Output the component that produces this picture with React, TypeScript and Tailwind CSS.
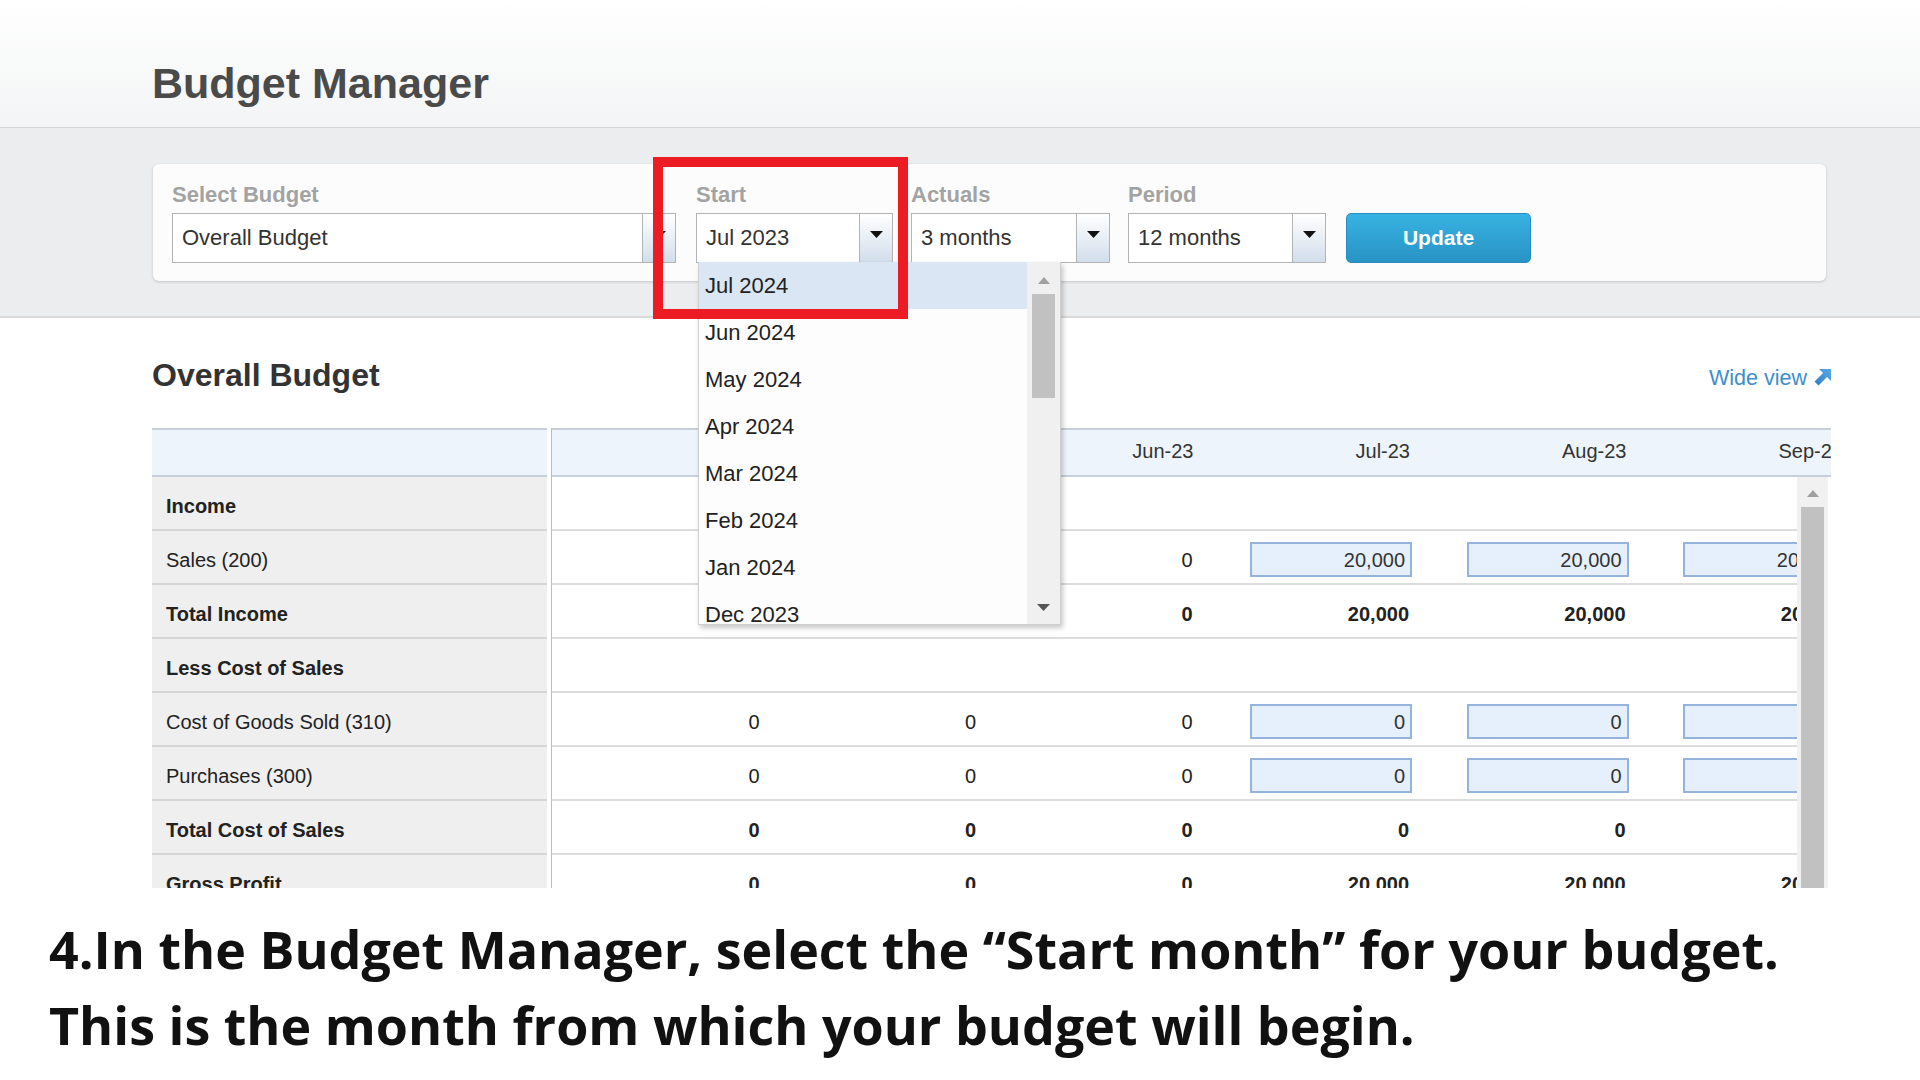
import React from "react";

function DownArrow({ color = "#111" }: { color?: string }) {
  return (
    <svg width="13" height="7" viewBox="0 0 13 7">
      <path d="M0 0H13L6.5 7Z" fill={color} />
    </svg>
  );
}

function UpArrow({ color = "#a0a0a0" }: { color?: string }) {
  return (
    <svg width="12" height="7" viewBox="0 0 12 7">
      <path d="M0 7H12L6 0Z" fill={color} />
    </svg>
  );
}

function SelectBox({ value, className }: { value: string; className: string }) {
  return (
    <div className={`flex h-[50px] border border-[#b3b3b3] bg-white ${className}`}>
      <div className="flex flex-1 items-center pl-[9px] text-[22px] leading-[24px] text-[#333]">{value}</div>
      <div className="flex w-[33px] justify-center border-l border-[#b3b3b3] bg-gradient-to-b from-white to-[#d2deec] pt-[17px]">
        <DownArrow />
      </div>
    </div>
  );
}

function Label({ children }: { children: React.ReactNode }) {
  return <div className="h-[24px] text-[22px] font-bold leading-[24px] text-[#a3a3a3]">{children}</div>;
}

const months = ["Apr-23", "May-23", "Jun-23", "Jul-23", "Aug-23", "Sep-23"];

type Cell = { v: string; input?: boolean };
type Row = { label: string; bold?: boolean; cells: Cell[] };

const inp = (v: string): Cell => ({ v, input: true });
const val = (v: string): Cell => ({ v });

const rows: Row[] = [
  { label: "Income", bold: true, cells: [] },
  { label: "Sales (200)", cells: [val("0"), val("0"), val("0"), inp("20,000"), inp("20,000"), inp("20,000")] },
  { label: "Total Income", bold: true, cells: [val("0"), val("0"), val("0"), val("20,000"), val("20,000"), val("20,000")] },
  { label: "Less Cost of Sales", bold: true, cells: [] },
  { label: "Cost of Goods Sold (310)", cells: [val("0"), val("0"), val("0"), inp("0"), inp("0"), inp("0")] },
  { label: "Purchases (300)", cells: [val("0"), val("0"), val("0"), inp("0"), inp("0"), inp("0")] },
  { label: "Total Cost of Sales", bold: true, cells: [val("0"), val("0"), val("0"), val("0"), val("0"), val("0")] },
  { label: "Gross Profit", bold: true, cells: [val("0"), val("0"), val("0"), val("20,000"), val("20,000"), val("20,000")] },
];

const listItems = ["Jul 2024", "Jun 2024", "May 2024", "Apr 2024", "Mar 2024", "Feb 2024", "Jan 2024", "Dec 2023"];

function WideIcon() {
  return (
    <svg width="18" height="18" viewBox="0 0 18 18">
      <defs>
        <linearGradient id="wv" x1="0" y1="1" x2="1" y2="0">
          <stop offset="0" stopColor="#2f7fc4" />
          <stop offset="1" stopColor="#5aa8e6" />
        </linearGradient>
      </defs>
      <path d="M18 0V12L14 8L5.5 16.5L1.5 12.5L10 4L6 0Z" fill="url(#wv)" />
    </svg>
  );
}

export default function App() {
  return (
    <div className="relative h-[1080px] w-[1920px] overflow-hidden bg-white">
      <div className="h-[888px] overflow-hidden font-['Liberation_Sans',Arial,sans-serif]">
        {/* Header */}
        <div className="h-[128px] border-b border-[#d6d6d6] bg-gradient-to-b from-white to-[#f3f4f5] pl-[152px] pt-[62px]">
          <div className="text-[43px] font-bold leading-[43px] text-[#4a4a4a]">Budget Manager</div>
        </div>

        {/* Filter band */}
        <div className="h-[190px] border-b-2 border-[#d9d9da] bg-[#ecedee] pt-[36px]">
          <div className="ml-[153px] flex h-[117px] w-[1673px] items-start rounded-[6px] bg-[#fcfcfc] pl-[19px] pt-[19px] shadow-[0_1px_3px_rgba(0,0,0,0.18)]">
            <div className="flex flex-col gap-[6px]">
              <Label>Select Budget</Label>
              <SelectBox value="Overall Budget" className="w-[504px]" />
            </div>
            <div className="relative ml-[20px] flex flex-col gap-[6px]">
              <Label>Start</Label>
              <SelectBox value="Jul 2023" className="w-[197px]" />
              <div className="absolute left-[2px] top-[79px] z-20 flex h-[363px] w-[363px] border-x border-b border-[#cfcfcf] shadow-[2px_3px_5px_rgba(0,0,0,0.22)]">
                <div className="flex w-[329px] flex-col overflow-hidden bg-[#fdfdfd]">
                  {listItems.map((m, i) => (
                    <div
                      key={m}
                      className={`flex h-[47px] shrink-0 items-center pl-[6px] text-[22px] leading-[24px] text-[#222] ${i === 0 ? "bg-[#dbe6f5]" : ""}`}
                    >
                      {m}
                    </div>
                  ))}
                </div>
                <div className="flex w-[33px] flex-col items-center bg-[#f0f0f0]">
                  <div className="mt-[15px] flex">
                    <UpArrow />
                  </div>
                  <div className="mt-[10px] h-[104px] w-[23px] bg-[#c1c1c1]" />
                  <div className="mb-[13px] mt-auto flex">
                    <DownArrow color="#555" />
                  </div>
                </div>
              </div>
            </div>
            <div className="ml-[18px] flex flex-col gap-[6px]">
              <Label>Actuals</Label>
              <SelectBox value="3 months" className="w-[199px]" />
            </div>
            <div className="ml-[18px] flex flex-col gap-[6px]">
              <Label>Period</Label>
              <SelectBox value="12 months" className="w-[198px]" />
            </div>
            <div className="ml-[20px] flex flex-col gap-[6px]">
              <div className="h-[24px]" />
              <button className="h-[50px] w-[185px] rounded-[5px] border border-[#2a8cbd] bg-gradient-to-b from-[#37b3e3] to-[#2893c4] text-[21px] font-bold text-white">
                Update
              </button>
            </div>
          </div>
        </div>

        {/* Section heading */}
        <div className="ml-[152px] flex h-[110px] w-[1679px] items-center justify-between pt-[4px]">
          <div className="text-[32px] font-bold text-[#333]">Overall Budget</div>
          <div className="flex items-center gap-[6px] pt-[6px] text-[21.5px] text-[#3d8fc9]">
            <span>Wide view</span>
            <WideIcon />
          </div>
        </div>

        {/* Table */}
        <div className="ml-[152px] flex w-[1679px]">
          <div className="w-[399px] shrink-0 border-r-[4px] border-white">
            <div className="h-[49px] border-y-2 border-[#c7cfda] bg-[#eef4fc]" />
            {rows.map((r) => (
              <div
                key={r.label}
                className={`flex h-[54px] items-center border-b-2 border-[#d5d5d5] bg-[#efefef] pl-[14px] pt-[5px] text-[20px] text-[#222] ${r.bold ? "font-bold" : ""}`}
              >
                {r.label}
              </div>
            ))}
          </div>
          <div className="flex min-w-0 flex-1 flex-col border-l border-[#a9c0e4]">
            <div className="flex h-[49px] overflow-hidden border-y-2 border-[#c7cfda] bg-[#eef4fc]">
              {months.map((m) => (
                <div key={m} className="flex w-[216.5px] shrink-0 items-center justify-end pb-[3px] pr-[8px] text-[20px] text-[#333]">
                  {m}
                </div>
              ))}
            </div>
            <div className="flex">
              <div className="w-[1245px] overflow-hidden">
                {rows.map((r) => (
                  <div key={r.label} className="flex h-[54px] border-b-2 border-[#dcdcdc] pt-[5px]">
                    {r.cells.map((c, i) =>
                      c.input ? (
                        <div key={i} className="flex w-[216.5px] shrink-0 items-center justify-end pr-[6px]">
                          <div className="flex h-[35px] w-[162px] items-center justify-end border-2 border-[#95b3dc] bg-[#e6f0fd] pr-[5px] text-[20px] text-[#333]">
                            {c.v}
                          </div>
                        </div>
                      ) : (
                        <div
                          key={i}
                          className={`flex w-[216.5px] shrink-0 items-center justify-end pr-[9px] text-[20px] text-[#222] ${r.bold ? "font-bold" : ""}`}
                        >
                          {c.v}
                        </div>
                      )
                    )}
                  </div>
                ))}
              </div>
              <div className="flex w-[31px] flex-col items-center bg-[#f1f1f1]">
                <div className="mt-[13px] flex">
                  <UpArrow />
                </div>
                <div className="mt-[10px] h-[420px] w-[23px] bg-[#c1c1c1]" />
              </div>
            </div>
          </div>
        </div>
      </div>

      {/* Caption */}
      <div className="pl-[49px] pt-[23px] font-['Open_Sans',sans-serif] text-[52px] font-bold leading-[76px] text-[#111]">
        <div className="whitespace-nowrap">4.In the Budget Manager, select the “Start month” for your budget.</div>
        <div className="whitespace-nowrap">This is the month from which your budget will begin.</div>
      </div>

      {/* Red highlight annotation */}
      <div className="pointer-events-none absolute left-[653px] top-[157px] z-30 h-[162px] w-[255px] border-[10px] border-[#ed1c24]" />
    </div>
  );
}
